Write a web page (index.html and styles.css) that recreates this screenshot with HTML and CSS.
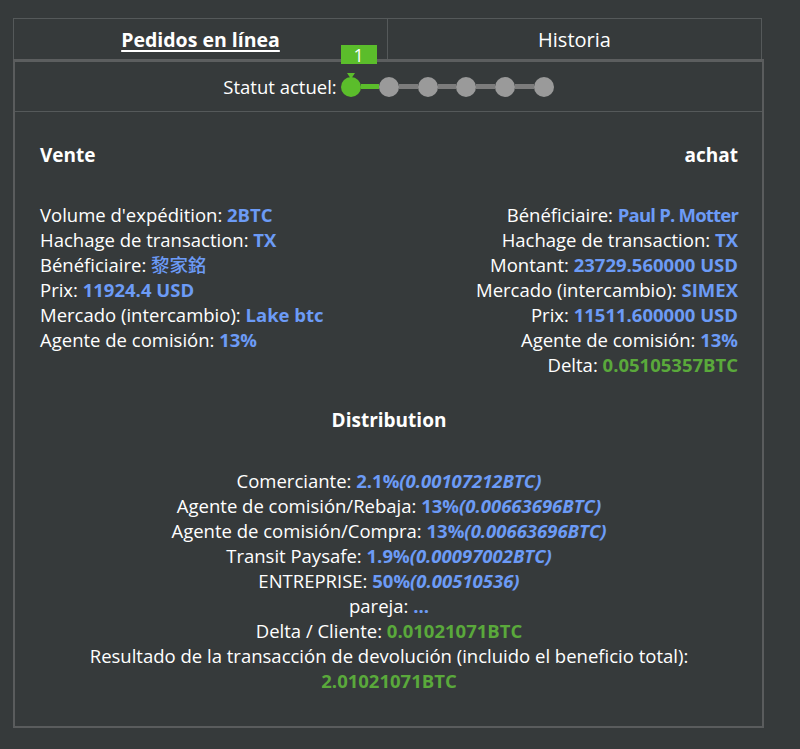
FILE: index.html
```html
<!DOCTYPE html>
<html lang="es">
<head>
<meta charset="utf-8">
<title>Pedidos en línea</title>
<link rel="stylesheet" href="styles.css">
</head>
<body>
<div class="wrap">
  <div class="tabs">
    <div class="tab active"><span class="tab-label">Pedidos en línea</span></div>
    <div class="tab"><span class="tab-label">Historia</span></div>
  </div>
  <div class="panel">
    <div class="status">
      <span class="status-label">Statut actuel:</span>
      <div class="stepper">
        <span class="badge">1</span>
        <span class="dot on"><i class="pointer"></i></span>
        <span class="bar on"></span>
        <span class="dot"></span>
        <span class="bar"></span>
        <span class="dot"></span>
        <span class="bar"></span>
        <span class="dot"></span>
        <span class="bar"></span>
        <span class="dot"></span>
        <span class="bar"></span>
        <span class="dot"></span>
      </div>
    </div>
    <div class="content">
      <div class="cols">
        <div class="col">
          <h3 class="heading">Vente</h3>
          <div class="rows">
            <div>Volume d'expédition: <b class="blue">2BTC</b></div>
            <div>Hachage de transaction: <b class="blue">TX</b></div>
            <div>Bénéficiaire: <b class="blue cjk">黎家銘</b></div>
            <div>Prix: <b class="blue">11924.4 USD</b></div>
            <div>Mercado (intercambio): <b class="blue">Lake btc</b></div>
            <div>Agente de comisión: <b class="blue">13%</b></div>
          </div>
        </div>
        <div class="col right">
          <h3 class="heading">achat</h3>
          <div class="rows">
            <div>Bénéficiaire: <b class="blue name">Paul P. Motter</b></div>
            <div>Hachage de transaction: <b class="blue">TX</b></div>
            <div>Montant: <b class="blue">23729.560000 USD</b></div>
            <div>Mercado (intercambio): <b class="blue">SIMEX</b></div>
            <div>Prix: <b class="blue">11511.600000 USD</b></div>
            <div>Agente de comisión: <b class="blue">13%</b></div>
            <div>Delta: <b class="green">0.05105357BTC</b></div>
          </div>
        </div>
      </div>
      <div class="dist">
        <h3 class="heading">Distribution</h3>
        <div class="rows">
          <div>Comerciante: <b class="blue">2.1%<i>(0.00107212BTC)</i></b></div>
          <div>Agente de comisión/Rebaja: <b class="blue">13%<i>(0.00663696BTC)</i></b></div>
          <div>Agente de comisión/Compra: <b class="blue">13%<i>(0.00663696BTC)</i></b></div>
          <div>Transit Paysafe: <b class="blue">1.9%<i>(0.00097002BTC)</i></b></div>
          <div>ENTREPRISE: <b class="blue">50%<i>(0.00510536)</i></b></div>
          <div>pareja: <b class="blue">...</b></div>
          <div>Delta / Cliente: <b class="green">0.01021071BTC</b></div>
          <div>Resultado de la transacción de devolución (incluido el beneficio total):</div>
          <div><b class="green">2.01021071BTC</b></div>
        </div>
      </div>
    </div>
  </div>
</div>
</body>
</html>
```
FILE: styles.css
```css
html, body {
  margin: 0;
  padding: 0;
}
body {
  background: #363a3b;
  color: #ffffff;
  font-family: "Open Sans", "Noto Sans CJK TC", sans-serif;
  font-size: 18.5px;
  line-height: 25px;
}
.wrap {
  width: 751px;
  margin: 18px 0 0 13px;
}
.tabs {
  display: flex;
  width: 749px;
  height: 41px;
  box-sizing: border-box;
  border: 1px solid #55595a;
  border-bottom: none;
}
.tab {
  flex: 1;
  display: flex;
  align-items: center;
  justify-content: center;
  padding-top: 1px;
  font-size: 20px;
}
.tab + .tab {
  border-left: 1px solid #55595a;
}
.tab.active .tab-label {
  font-size: 19.5px;
  font-weight: bold;
  text-decoration: underline;
  text-decoration-thickness: 2px;
  text-underline-offset: 3px;
}
.panel {
  border: 2px solid #5a5c5d;
  border-top: 3px solid #5c5e5f;
}
.status {
  height: 49px;
  border-bottom: 1px solid #55595a;
  display: flex;
  align-items: center;
  justify-content: center;
  gap: 4px;
}
.stepper {
  position: relative;
  display: flex;
  align-items: center;
}
.dot {
  position: relative;
  width: 20px;
  height: 20px;
  border-radius: 50%;
  background: #9a9a9a;
}
.dot.on {
  background: #5bbd2b;
}
.bar {
  width: 18.6px;
  height: 5px;
  background: #7c7c7c;
}
.bar.on {
  background: #5bbd2b;
}
.badge {
  position: absolute;
  left: 0;
  top: -32px;
  width: 36px;
  height: 19px;
  background: #5bbd2b;
  color: #fff;
  text-align: center;
  font-size: 18px;
  line-height: 20px;
}
.pointer {
  position: absolute;
  left: 6px;
  top: -4px;
  width: 0;
  height: 0;
  border-left: 4px solid transparent;
  border-right: 4px solid transparent;
  border-top: 6px solid #5bbd2b;
}
.content {
  padding: 31px 24px 33px 25px;
}
.heading {
  margin: 0;
  font-size: 19px;
  line-height: 25px;
  font-weight: bold;
}
.cols {
  display: flex;
  justify-content: space-between;
}
.col .rows {
  margin-top: 34px;
}
.col.right {
  text-align: right;
}
.dist {
  margin-top: 31px;
  text-align: center;
}
.dist .rows {
  margin-top: 35px;
}
.blue {
  color: #6c9bf6;
  font-weight: bold;
}
.blue i {
  font-style: italic;
}
.green {
  color: #5aa93b;
  font-weight: bold;
}
.name {
  letter-spacing: -0.8px;
}
.cjk {
  font-family: "Noto Sans CJK TC", sans-serif;
  font-weight: 500;
}
```
